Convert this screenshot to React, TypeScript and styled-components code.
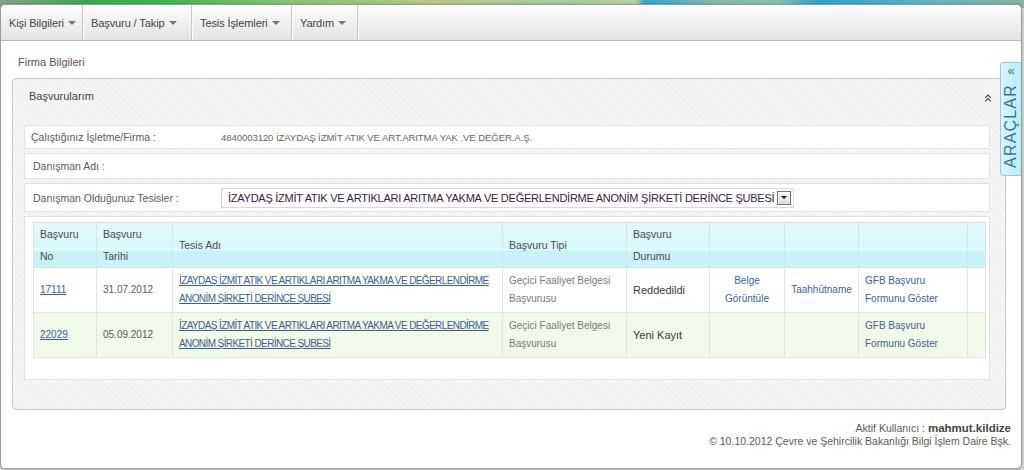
import React from "react";
import styled, { createGlobalStyle } from "styled-components";
import { ChevronsUp } from "lucide-react";

interface Application {
  no: string;
  date: string;
  facility: string[];
  type: string[];
  status: string;
  document: string[];
  pledge: string;
  form: string[];
}

const menu = [
  { label: "Kişi Bilgileri", width: 82 },
  { label: "Başvuru / Takip", width: 109 },
  { label: "Tesis İşlemleri", width: 100 },
  { label: "Yardım", width: 66 },
];

const facilityName = [
  "İZAYDAŞ İZMİT ATIK VE ARTIKLARI ARITMA YAKMA VE DEĞERLENDİRME",
  "ANONİM ŞİRKETİ DERİNCE ŞUBESİ",
];

const applications: Application[] = [
  {
    no: "17111",
    date: "31.07.2012",
    facility: facilityName,
    type: ["Geçici Faaliyet Belgesi", "Başvurusu"],
    status: "Reddedildi",
    document: ["Belge", "Görüntüle"],
    pledge: "Taahhütname",
    form: ["GFB Başvuru", "Formunu Göster"],
  },
  {
    no: "22029",
    date: "05.09.2012",
    facility: facilityName,
    type: ["Geçici Faaliyet Belgesi", "Başvurusu"],
    status: "Yeni Kayıt",
    document: [],
    pledge: "",
    form: ["GFB Başvuru", "Formunu Göster"],
  },
];

const columns = [63, 76, 330, 124, 83, 75, 74, 109, 18];

const lines = (parts: string[]) =>
  parts.map((p, i) => (
    <React.Fragment key={i}>
      {i > 0 && <br />}
      {p}
    </React.Fragment>
  ));

const App = () => {
  return (
    <>
      <GlobalStyle />
      <Frame>
        <MenuBar>
          {menu.map((m) => (
            <MenuItem key={m.label} $w={m.width}>
              {m.label}
              <Caret />
            </MenuItem>
          ))}
        </MenuBar>

        <Breadcrumb>Firma Bilgileri</Breadcrumb>

        <Panel>
          <PanelHeader>
            <PanelTitle>Başvurularım</PanelTitle>
            <ChevronsUp size={12} strokeWidth={2.2} color="#555" />
          </PanelHeader>
          <PanelBody>
            <InfoRow $h={24}>
              <Label $indent={6}>Çalıştığınız İşletme/Firma :</Label>
              <Value>4840003120 İZAYDAŞ İZMİT ATIK VE ART.ARITMA YAK .VE DEĞER.A.Ş.</Value>
            </InfoRow>
            <InfoRow $h={26}>
              <Label $indent={8}>Danışman Adı :</Label>
            </InfoRow>
            <InfoRow $h={29}>
              <Label $indent={8}>Danışman Olduğunuz Tesisler :</Label>
              <Select>
                <SelectText>
                  İZAYDAŞ İZMİT ATIK VE ARTIKLARI ARITMA YAKMA VE DEĞERLENDİRME ANONİM ŞİRKETİ DERİNCE ŞUBESİ
                </SelectText>
                <SelectButton />
              </Select>
            </InfoRow>
            <TableBox>
              <Table>
                <colgroup>
                  {columns.map((w, i) => (
                    <col key={i} style={{ width: w }} />
                  ))}
                </colgroup>
                <thead>
                  <HeadRow>
                    <Th>Başvuru<br />No</Th>
                    <Th>Başvuru<br />Tarihi</Th>
                    <Th>Tesis Adı</Th>
                    <Th>Başvuru Tipi</Th>
                    <Th>Başvuru<br />Durumu</Th>
                    <Th />
                    <Th />
                    <Th />
                    <Th />
                  </HeadRow>
                </thead>
                <tbody>
                  {applications.map((a, i) => (
                    <BodyRow key={a.no} $alt={i % 2 === 1}>
                      <Td><Link>{a.no}</Link></Td>
                      <Td>{a.date}</Td>
                      <Td><Link $tight>{lines(a.facility)}</Link></Td>
                      <Td $muted>{lines(a.type)}</Td>
                      <Status>{a.status}</Status>
                      <Td $center><Action>{lines(a.document)}</Action></Td>
                      <Td $center><Action>{a.pledge}</Action></Td>
                      <Td><Action>{lines(a.form)}</Action></Td>
                      <Td />
                    </BodyRow>
                  ))}
                </tbody>
              </Table>
            </TableBox>
          </PanelBody>
        </Panel>

        <Footer>
          <div>
            Aktif Kullanıcı : <User>mahmut.kildize</User>
          </div>
          <div>© 10.10.2012 Çevre ve Şehircilik Bakanlığı Bilgi İşlem Daire Bşk.</div>
        </Footer>

        <ToolsTab>
          <TabArrow>«</TabArrow>
          <TabText>ARAÇLAR</TabText>
        </ToolsTab>
      </Frame>
    </>
  );
};

const GlobalStyle = createGlobalStyle`
  html, body {
    margin: 0;
    height: 470px;
    overflow: hidden;
  }
  body {
    font-family: "Liberation Sans", Arial, sans-serif;
    background:
      linear-gradient(90deg, #8aa08a 0%, #3aa858 8%, #2fb44e 14%, #88c27a 28%, #b6c88a 42%, #a8c8a0 55%, #bcd0a0 62%, #30a8d0 63%, #8ab8a8 70%, #88c0b0 76%, #2aa2d2 80%, #5cb6c0 90%, #8ab0a0 100%) top / 100% 8px no-repeat,
      #d4d4d4;
  }
  #root {
    height: 470px;
  }
`;

const Frame = styled.div`
  position: relative;
  box-sizing: border-box;
  margin: 4px 2px 0 0;
  height: 465px;
  background: #fff;
  border: 1px solid #9a9a9a;
  border-radius: 5px;
  display: flex;
  flex-direction: column;
  box-shadow: 0 0 2px rgba(0, 0, 0, 0.3);
`;

const MenuBar = styled.div`
  display: flex;
  height: 35px;
  border-bottom: 1px solid #b5b5b5;
  border-radius: 5px 5px 0 0;
  background: linear-gradient(#fdfdfd, #f3f3f3 40%, #e3e3e3);
`;

const MenuItem = styled.div<{ $w: number }>`
  display: flex;
  align-items: center;
  gap: 4px;
  width: ${(p) => p.$w}px;
  box-sizing: border-box;
  padding-left: 8px;
  font-size: 11px;
  letter-spacing: -0.1px;
  color: #444;
  border-right: 1px solid #c9c9c9;
  box-shadow: 1px 0 0 #fafafa;
`;

const Caret = styled.span`
  width: 0;
  height: 0;
  margin-top: 1px;
  border-left: 4px solid transparent;
  border-right: 4px solid transparent;
  border-top: 4px solid #777;
`;

const Breadcrumb = styled.div`
  margin: 13px 0 0 17px;
  line-height: 16px;
  font-size: 11px;
  color: #5e4c60;
`;

const Panel = styled.div`
  margin: 8px 0 0 11px;
  width: 994px;
  box-sizing: border-box;
  border: 1px solid #c6c6c6;
  border-radius: 4px;
  background-color: #f1f1f1;
  background-image: repeating-linear-gradient(45deg, rgba(255, 255, 255, 0.5) 0 1px, transparent 1px 3px);
`;

const PanelHeader = styled.div`
  height: 46px;
  box-sizing: border-box;
  display: flex;
  justify-content: space-between;
  align-items: flex-start;
  padding: 10px 11px 0 16px;
  svg {
    margin-top: 3px;
  }
`;

const PanelTitle = styled.div`
  font-size: 11px;
  color: #444;
  line-height: 14px;
`;

const PanelBody = styled.div`
  display: flex;
  flex-direction: column;
  gap: 4px;
  padding: 0 15px 29px 11px;
`;

const InfoRow = styled.div<{ $h: number }>`
  display: flex;
  align-items: center;
  height: ${(p) => p.$h}px;
  box-sizing: border-box;
  background: #fff;
  border: 1px solid #e2e2e2;
  font-size: 10.5px;
`;

const Label = styled.div<{ $indent: number }>`
  width: ${(p) => 196 - p.$indent}px;
  padding-left: ${(p) => p.$indent}px;
  color: #5a5a5a;
`;

const Value = styled.div`
  color: #666;
  font-size: 9.6px;
  letter-spacing: -0.1px;
`;

const Select = styled.div`
  display: flex;
  align-items: center;
  height: 20px;
  box-sizing: border-box;
  border: 1px solid #d8d8d8;
  padding: 0 2px 0 6px;
  gap: 3px;
`;

const SelectText = styled.span`
  font-size: 11px;
  color: #3a2044;
  letter-spacing: -0.25px;
`;

const SelectButton = styled.span`
  width: 14px;
  height: 14px;
  box-sizing: border-box;
  border: 1px solid #777;
  background: linear-gradient(#fafafa, #ddd);
  display: flex;
  align-items: center;
  justify-content: center;
  &::after {
    content: "";
    border-left: 3px solid transparent;
    border-right: 3px solid transparent;
    border-top: 3px solid #111;
  }
`;

const TableBox = styled.div`
  height: 164px;
  box-sizing: border-box;
  background: #fff;
  border: 1px solid #e2e2e2;
  padding: 5px 4px 0 8px;
`;

const Table = styled.table`
  width: 952px;
  table-layout: fixed;
  border-collapse: collapse;
  font-size: 10px;
  color: #5a5a5a;
  border: 1px solid #d6e2e2;
`;

const HeadRow = styled.tr`
  height: 45px;
  background: linear-gradient(#e4fafd 0%, #d6f7fc 55%, #f2feff 58%, #c6f2f9 63%, #cbf3fa 100%);
`;

const Th = styled.th`
  text-align: left;
  font-weight: normal;
  font-size: 10.5px;
  line-height: 22px;
  color: #4a4a4a;
  padding: 0 6px;
  border-left: 1px solid #d6e4e4;
  border-bottom: 1px solid #d6e4e4;
`;

const BodyRow = styled.tr<{ $alt: boolean }>`
  height: 45px;
  background: ${(p) => (p.$alt ? "#f1f9e8" : "#fff")};
  border-bottom: 1px solid #dfe6df;
`;

const Td = styled.td<{ $center?: boolean; $muted?: boolean }>`
  padding: 0 6px;
  line-height: 18px;
  white-space: nowrap;
  overflow: hidden;
  text-align: ${(p) => (p.$center ? "center" : "left")};
  color: ${(p) => (p.$muted ? "#7a7a7a" : "#5a5a5a")};
  border-left: 1px solid #dfe6df;
  vertical-align: middle;
`;

const Status = styled.td`
  padding: 0 6px;
  font-size: 11px;
  color: #3a3a3a;
  border-left: 1px solid #dfe6df;
`;

const Link = styled.a<{ $tight?: boolean }>`
  color: #3b5f8c;
  text-decoration: underline;
  letter-spacing: ${(p) => (p.$tight ? "-0.6px" : "0")};
`;

const Action = styled.span`
  color: #3d6390;
`;

const Footer = styled.div`
  margin-top: 12px;
  padding-right: 10px;
  text-align: right;
  font-size: 10.5px;
  line-height: 13px;
  color: #5a5a5a;
`;

const User = styled.b`
  font-size: 11.5px;
  color: #444;
`;

const ToolsTab = styled.div`
  position: absolute;
  top: 57px;
  right: 0;
  width: 21px;
  height: 114px;
  box-sizing: border-box;
  border: 1px solid #9fc9d2;
  border-right: none;
  border-radius: 4px 0 0 4px;
  background: linear-gradient(90deg, #d6f6fb, #b9ecf5);
  display: flex;
  flex-direction: column;
  align-items: center;
  padding-top: 2px;
`;

const TabArrow = styled.span`
  font-size: 13px;
  line-height: 12px;
  color: #3c6f8c;
`;

const TabText = styled.span`
  writing-mode: vertical-rl;
  transform: rotate(180deg);
  font-size: 16px;
  letter-spacing: 1.2px;
  color: #3b7196;
  margin-top: 7px;
`;

export default App;
